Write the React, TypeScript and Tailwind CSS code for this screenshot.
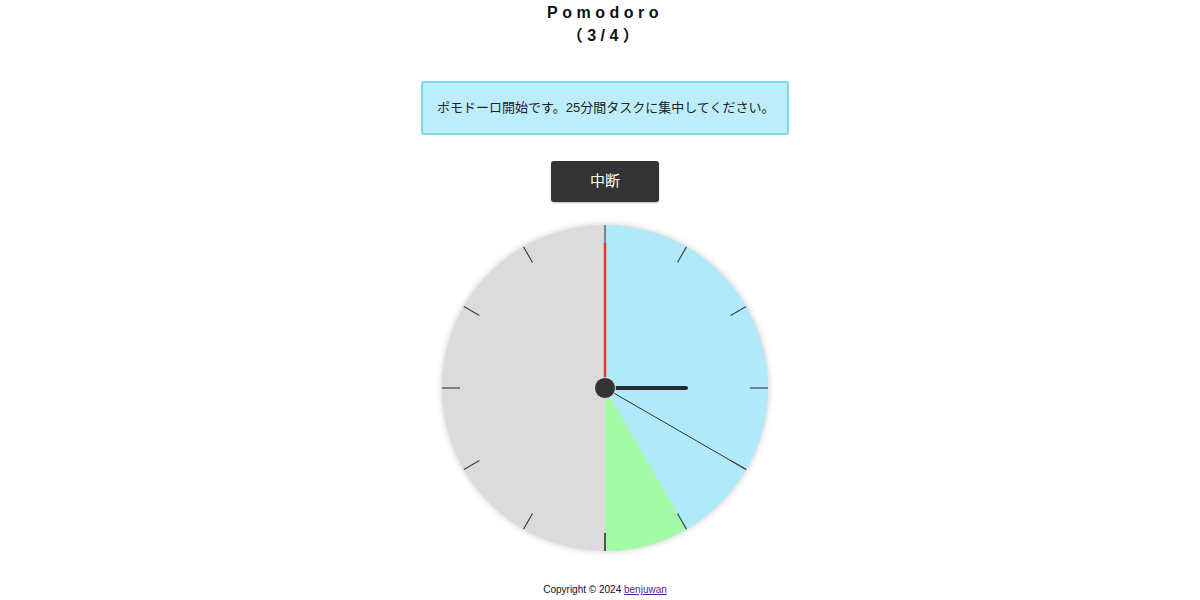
import React from 'react';

const R = 163;
const C = 170;

function pt(deg: number, r: number) {
  const a = (deg * Math.PI) / 180;
  return { x: C + r * Math.sin(a), y: C - r * Math.cos(a) };
}

function sector(from: number, to: number) {
  const a = pt(from, R);
  const b = pt(to, R);
  const large = to - from > 180 ? 1 : 0;
  return `M ${C} ${C} L ${a.x} ${a.y} A ${R} ${R} 0 ${large} 1 ${b.x} ${b.y} Z`;
}

function Clock() {
  const ticks = Array.from({ length: 12 }, (_, i) => i * 30);
  const split = pt(120, R);
  return (
    <svg width="340" height="340" viewBox="0 0 340 340" className="drop-shadow-[0_0_3px_rgba(0,0,0,0.22)]">
      <circle cx={C} cy={C} r={R} fill="#dbdbdb" />
      <path d={sector(0, 150)} fill="#b0e9fa" />
      <path d={sector(150, 180)} fill="#a3fba8" />
      <line x1={C} y1={C} x2={split.x} y2={split.y} stroke="#333" strokeWidth="1" />
      {/* second hand */}
      <line x1={C} y1={C} x2={C} y2={C - 145} stroke="#e8392b" strokeWidth="2.5" />
      {ticks.map((d) => {
        const a = pt(d, R - 18);
        const b = pt(d, R);
        return (
          <line key={d} x1={a.x} y1={a.y} x2={b.x} y2={b.y} stroke="#444" strokeWidth={d === 180 ? 1.8 : 1.2} />
        );
      })}
      {/* minute hand */}
      <line x1={C} y1={C} x2={C + 81} y2={C} stroke="#2a2a2a" strokeWidth="4" strokeLinecap="round" />
      <circle cx={C} cy={C} r="10.5" fill="#333" stroke="#f5f5f5" strokeWidth="0.8" />
    </svg>
  );
}

export default function App() {
  return (
    <div className="w-full h-[600px] bg-white flex flex-col items-center pl-[10px] font-['Liberation_Sans','Noto_Sans_CJK_JP',sans-serif] text-[#222]">
      {/* Title */}
      <h1 className="mt-[1px] text-[16px] leading-[23px] font-bold tracking-[0.28em] text-center text-[#111]">
        Pomodoro
        <br />
        （3/4）
      </h1>

      {/* Message */}
      <div className="mt-[34px] w-[368px] h-[54px] flex items-center px-[14px] bg-[#bdedfb] border-2 border-[#80d7f5] rounded-[3px]">
        <p className="text-[13px] whitespace-nowrap text-[#222]">ポモドーロ開始です。25分間タスクに集中してください。</p>
      </div>

      {/* Button */}
      <button className="mt-[26px] w-[108px] h-[41px] bg-[#333] text-white text-[15px] rounded-[3px] shadow-[0_1px_2px_rgba(0,0,0,0.25)]">
        中断
      </button>

      {/* Clock */}
      <div className="mt-[16px]">
        <Clock />
      </div>

      {/* Footer */}
      <footer className="mt-[24px] text-[10px] text-[#111]">
        Copyright © 2024{' '}
        <a href="#" className="underline text-[#4b1ea0]">
          benjuwan
        </a>
      </footer>
    </div>
  );
}
